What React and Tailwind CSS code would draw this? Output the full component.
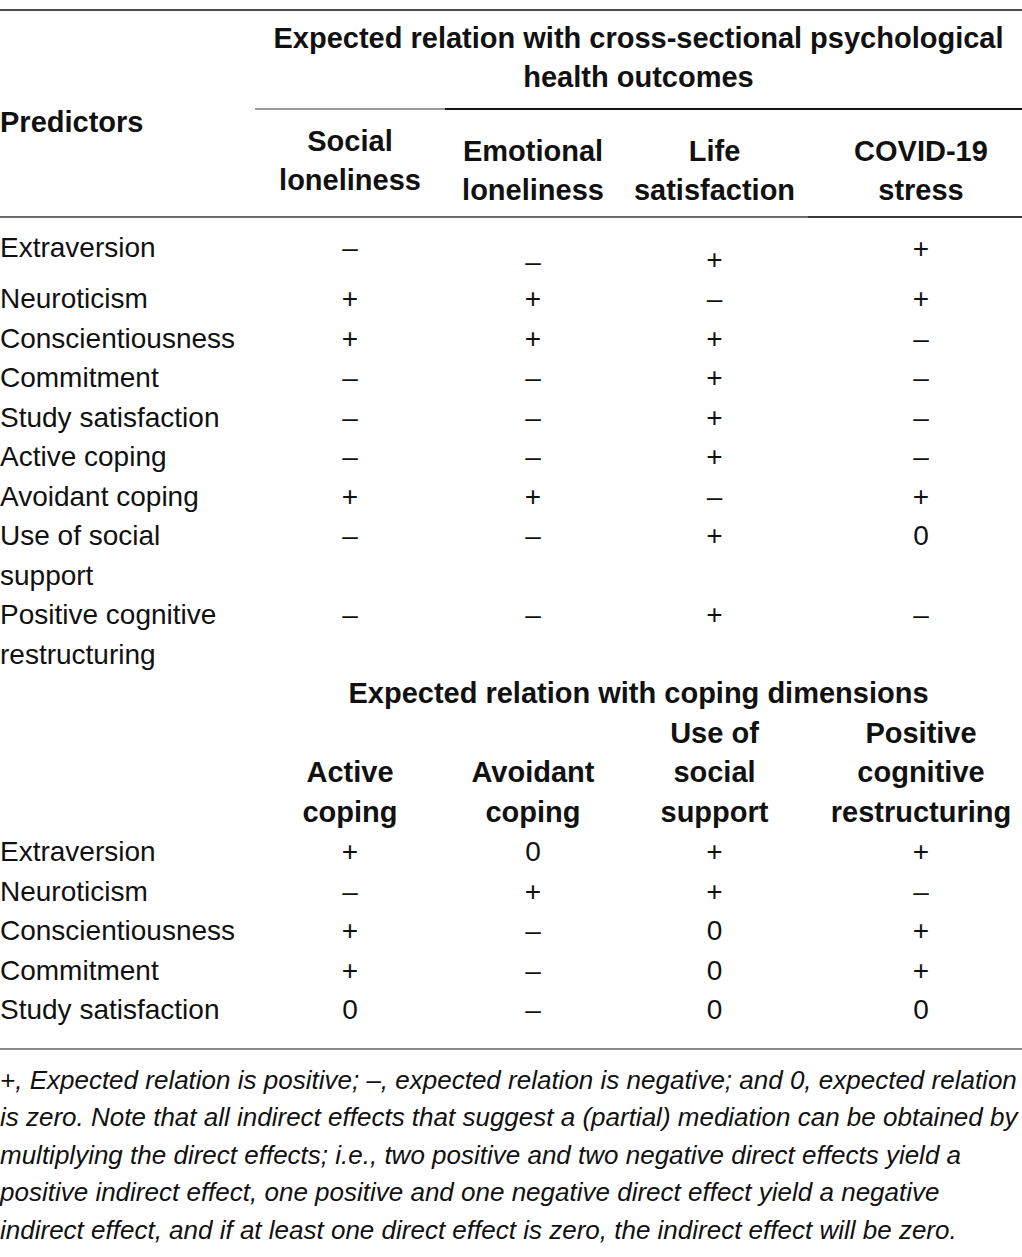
import React from "react";

const M = "\u2013";

const topRows = [
  { label: "Neuroticism", v: ["+", "+", M, "+"] },
  { label: "Conscientiousness", v: ["+", "+", "+", M] },
  { label: "Commitment", v: [M, M, "+", M] },
  { label: "Study satisfaction", v: [M, M, "+", M] },
  { label: "Active coping", v: [M, M, "+", M] },
  { label: "Avoidant coping", v: ["+", "+", M, "+"] },
  { label: ["Use of social", "support"], v: [M, M, "+", "0"] },
  { label: ["Positive cognitive", "restructuring"], v: [M, M, "+", M] },
];

const copingRows = [
  { label: "Extraversion", v: ["+", "0", "+", "+"] },
  { label: "Neuroticism", v: [M, "+", "+", M] },
  { label: "Conscientiousness", v: ["+", M, "0", "+"] },
  { label: "Commitment", v: ["+", M, "0", "+"] },
  { label: "Study satisfaction", v: ["0", M, "0", "0"] },
];

// column widths: predictors | c1 | c2 | c3 | c4
const cols = ["w-[190px]", "w-[176px]", "w-[187px]", "w-[214px] pl-[12px]"];

const Row = ({ label, v }) => (
  <div className="flex">
    <div className="w-[255px]">
      {Array.isArray(label) ? (
        <>
          {label[0]}
          <br />
          {label[1]}
        </>
      ) : (
        label
      )}
    </div>
    {v.map((x, i) => (
      <div key={i} className={`${cols[i]} text-center`}>
        {x}
      </div>
    ))}
  </div>
);

export default function App() {
  return (
    <div
      className="w-[1022px] h-[1257px] bg-white text-[#111] text-[28px] leading-[39.5px] pt-[9px]"
      style={{ fontFamily: '"Liberation Sans", Arial, sans-serif' }}
    >
      {/* top rule */}
      <div className="h-[2px] bg-[#4a4a4a]" />

      {/* header block */}
      <div className="flex h-[205px] font-bold text-[29px] leading-[39px]">
        <div className="w-[255px] pt-[92px]">Predictors</div>
        <div className="flex-1 flex flex-col">
          <div className="h-[97px] pt-[8px] text-center whitespace-nowrap">
            Expected relation with cross-sectional psychological
            <br />
            health outcomes
          </div>
          <div className="flex h-[2px]">
            <div className="w-[190px] bg-[#9a9a9a]" />
            <div className="flex-1 bg-[#151515]" />
          </div>
          <div className="flex flex-1">
            <div className={`${cols[0]} text-center pt-[12px]`}>
              Social
              <br />
              loneliness
            </div>
            <div className={`${cols[1]} text-center pt-[22px]`}>
              Emotional
              <br />
              loneliness
            </div>
            <div className={`${cols[2]} text-center pt-[22px]`}>
              Life
              <br />
              satisfaction
            </div>
            <div className={`${cols[3]} text-center pt-[22px]`}>
              COVID-19
              <br />
              stress
            </div>
          </div>
        </div>
      </div>
      <div className="flex h-[2px]">
        <div className="w-[808px] bg-[#6a6a6a]" />
        <div className="flex-1 bg-[#3a3a3a]" />
      </div>

      {/* first data row, taller with offset marks */}
      <div className="flex h-[61px]">
        <div className="w-[255px] pt-[10px]">Extraversion</div>
        <div className={`${cols[0]} text-center pt-[10px]`}>{M}</div>
        <div className={`${cols[1]} text-center pt-[24px]`}>{M}</div>
        <div className={`${cols[2]} text-center pt-[22px]`}>+</div>
        <div className={`${cols[3]} text-center pt-[11px]`}>+</div>
      </div>

      {topRows.map((r, i) => (
        <Row key={i} {...r} />
      ))}

      {/* coping dimensions header */}
      <div className="flex font-bold text-[29px]">
        <div className="w-[255px]" />
        <div className="flex-1 flex flex-col">
          <div className="text-center">Expected relation with coping dimensions</div>
          <div className="flex items-end">
            <div className={`${cols[0]} text-center`}>
              Active
              <br />
              coping
            </div>
            <div className={`${cols[1]} text-center`}>
              Avoidant
              <br />
              coping
            </div>
            <div className={`${cols[2]} text-center`}>
              Use of
              <br />
              social
              <br />
              support
            </div>
            <div className={`${cols[3]} text-center whitespace-nowrap`}>
              Positive
              <br />
              cognitive
              <br />
              restructuring
            </div>
          </div>
        </div>
      </div>

      {copingRows.map((r, i) => (
        <Row key={i} {...r} />
      ))}

      {/* bottom rule */}
      <div className="mt-[18px] h-[2px] bg-[#8a8a8a]" />

      {/* footnote */}
      <div className="pt-[12px] italic text-[26px] leading-[37.5px] whitespace-nowrap">
        <div>
          +, Expected relation is positive; {M}, expected relation is negative; and 0, expected relation
        </div>
        <div>
          is zero. Note that all indirect effects that suggest a (partial) mediation can be obtained by
        </div>
        <div>
          multiplying the direct effects; i.e., two positive and two negative direct effects yield a
        </div>
        <div>
          positive indirect effect, one positive and one negative direct effect yield a negative
        </div>
        <div>
          indirect effect, and if at least one direct effect is zero, the indirect effect will be zero.
        </div>
      </div>
    </div>
  );
}
